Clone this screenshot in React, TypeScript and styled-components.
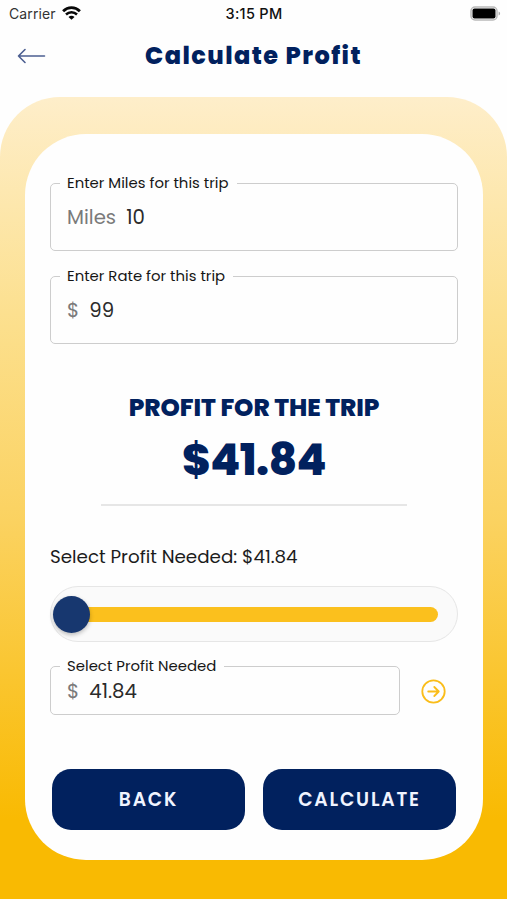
import React from "react";
import styled, { createGlobalStyle } from "styled-components";

const NAVY = "#01215e";

const GlobalStyle = createGlobalStyle`
  * { box-sizing: border-box; }
  body {
    margin: 0;
    background: #fefefe;
    font-family: Poppins, Inter, "Liberation Sans", sans-serif;
    color: #1c1c1c;
  }
`;

const Screen = styled.div`
  width: 507px;
  height: 900px;
  overflow: hidden;
  display: flex;
  flex-direction: column;
`;

const StatusBar = styled.div`
  height: 28px;
  display: grid;
  grid-template-columns: 1fr auto 1fr;
  align-items: center;
  padding: 0 6px 2px 9px;
  font-family: Inter, sans-serif;
  font-size: 14px;
`;

const Carrier = styled.div`
  display: flex;
  align-items: center;
  gap: 6px;
  color: #333;
  letter-spacing: 0.1px;
`;

const Clock = styled.div`
  margin-right: 2px;
  font-size: 14.5px;
  font-weight: 500;
  letter-spacing: 0.3px;
  color: #111;
`;

const Battery = styled.div`
  display: flex;
  justify-content: flex-end;
`;

const Header = styled.header`
  height: 69px;
  display: grid;
  grid-template-columns: 46px 1fr 46px;
  align-items: center;
  padding: 0 0 13px;
`;

const BackArrow = styled.div`
  display: flex;
  padding-left: 17px;
`;

const Title = styled.h1`
  margin: 0;
  text-align: center;
  font-size: 24px;
  line-height: 30px;
  font-weight: 800;
  letter-spacing: 1.45px;
  color: ${NAVY};
`;

const Panel = styled.main`
  height: 802px;
  padding: 37px 24.5px 39px 25px;
  border-radius: 60px 60px 0 0;
  background: linear-gradient(#feeeca 0%, #fce08f 27%, #fbd260 53%, #f9ba02 90%);
`;

const Card = styled.section`
  height: 726px;
  border-radius: 61px;
  background: #fefefe;
  padding: 40px 24.5px 0 25px;
  display: flex;
  flex-direction: column;
`;

const Field = styled.fieldset<{ $height: number; $width?: number; $gap?: number }>`
  margin: 0 0 ${(p) => p.$gap ?? 0}px;
  min-width: 0;
  width: ${(p) => (p.$width ? p.$width + "px" : "100%")};
  height: ${(p) => p.$height}px;
  border: 1.5px solid #cdcdcd;
  border-radius: 5px;
  padding: 0 16px 0 9px;
`;

const Legend = styled.legend`
  padding: 0 8px 0 7px;
  font-size: 14.9px;
  line-height: 18px;
  color: #161616;
`;

const Value = styled.div<{ $top: number }>`
  display: flex;
  gap: 10px;
  padding: ${(p) => p.$top}px 0 0 7px;
  font-size: 19.7px;
  line-height: 24px;
  color: #2b2b2b;
`;

const Prefix = styled.span`
  color: #7a7a7a;
`;

const ResultLabel = styled.h2`
  margin: 48px 0 0;
  text-align: center;
  font-size: 24.6px;
  line-height: 32px;
  font-weight: 800;
  letter-spacing: -0.07px;
  color: ${NAVY};
`;

const ResultAmount = styled.div`
  margin-top: 11px;
  text-align: center;
  font-size: 43.5px;
  line-height: 50px;
  font-weight: 800;
  letter-spacing: -0.5px;
  color: ${NAVY};
`;

const Divider = styled.hr`
  width: 306px;
  height: 2px;
  margin: 19px auto 0;
  border: 0;
  background: #e6e6e6;
`;

const SliderLabel = styled.div`
  margin-top: 38px;
  font-size: 18.3px;
  line-height: 26px;
  white-space: nowrap;
`;

const Slider = styled.div`
  margin-top: 16px;
  height: 56px;
  flex-shrink: 0;
  border: 1px solid #e6e6e6;
  border-radius: 28px;
  background: #fafafa;
  display: flex;
  align-items: center;
  padding: 0 19px 0 2px;
`;

const Thumb = styled.div`
  width: 37px;
  height: 37px;
  border-radius: 50%;
  background: #17376f;
  box-shadow: 0 2px 4px rgba(0, 0, 0, 0.25);
  z-index: 1;
`;

const Track = styled.div`
  flex: 1;
  height: 15px;
  margin-left: -8px;
  border-radius: 8px;
  background: #fbc01d;
`;

const AmountRow = styled.div`
  display: flex;
  align-items: flex-start;
  gap: 21px;
  margin-top: 15px;
`;

const Go = styled.div`
  padding-top: 21.5px;
  display: flex;
`;

const Buttons = styled.div`
  display: flex;
  gap: 18px;
  margin: 54px 2px 0;
`;

const Button = styled.button`
  flex: 1;
  height: 61px;
  border: 0;
  border-radius: 19px;
  background: ${NAVY};
  color: #f0f4ff;
  font-family: inherit;
  font-size: 18.7px;
  font-weight: 600;
  letter-spacing: 1.8px;
  padding: 0;
`;

const WifiIcon = () => (
  <svg width="19" height="14" viewBox="0 0 19 14" fill="none" stroke="#080808">
    <path d="M1.1 5.2C5.9.5 13.1.5 17.9 5.2" strokeWidth="2.8" />
    <path d="M4 8.5c3.1-3 7.9-3 11 0" strokeWidth="2.5" />
    <path d="M9.5 13.8 6.5 10.9c1.7-1.5 4.3-1.5 6 0z" fill="#080808" stroke="none" />
  </svg>
);

const BatteryIcon = () => (
  <svg width="31" height="15" viewBox="0 0 31 15" fill="none">
    <rect x="1" y="1" width="26" height="13" rx="4" stroke="#b9b9b9" strokeWidth="1.5" />
    <rect x="2.5" y="2.5" width="23" height="10" rx="2" fill="#000" />
    <path d="M28.6 5.5c2 .8 2 3.2 0 4z" fill="#aaa" />
  </svg>
);

const BackIcon = () => (
  <svg width="29" height="16" viewBox="0 0 29 16" fill="none" stroke="#4c5f91" strokeWidth="1.6" strokeLinecap="round" strokeLinejoin="round">
    <path d="M27.5 8H1.5M8 1.5 1.5 8 8 14.5" />
  </svg>
);

const GoIcon = () => (
  <svg width="25" height="25" viewBox="0 0 25 25" fill="none" stroke="#fabd1a" strokeWidth="1.8" strokeLinecap="round" strokeLinejoin="round">
    <circle cx="12.5" cy="12.5" r="11.2" />
    <path d="M7.2 12.5h10.6M13.3 8l4.5 4.5-4.5 4.5" />
  </svg>
);

export default function App() {
  return (
    <Screen>
      <GlobalStyle />
      <StatusBar>
        <Carrier>Carrier<WifiIcon /></Carrier>
        <Clock>3:15 PM</Clock>
        <Battery><BatteryIcon /></Battery>
      </StatusBar>
      <Header>
        <BackArrow><BackIcon /></BackArrow>
        <Title>Calculate Profit</Title>
      </Header>
      <Panel>
        <Card>
          <Field $height={77} $gap={16}>
            <Legend>Enter Miles for this trip</Legend>
            <Value $top={13}><Prefix>Miles</Prefix><span>10</span></Value>
          </Field>
          <Field $height={77}>
            <Legend>Enter Rate for this trip</Legend>
            <Value $top={13}><Prefix>$</Prefix><span>99</span></Value>
          </Field>
          <ResultLabel>PROFIT FOR THE TRIP</ResultLabel>
          <ResultAmount>$41.84</ResultAmount>
          <Divider />
          <SliderLabel>Select Profit Needed: $41.84</SliderLabel>
          <Slider><Thumb /><Track /></Slider>
          <AmountRow>
            <Field $height={58} $width={350}>
              <Legend>Select Profit Needed</Legend>
              <Value $top={4}><Prefix>$</Prefix><span>41.84</span></Value>
            </Field>
            <Go><GoIcon /></Go>
          </AmountRow>
          <Buttons>
            <Button>BACK</Button>
            <Button>CALCULATE</Button>
          </Buttons>
        </Card>
      </Panel>
    </Screen>
  );
}
